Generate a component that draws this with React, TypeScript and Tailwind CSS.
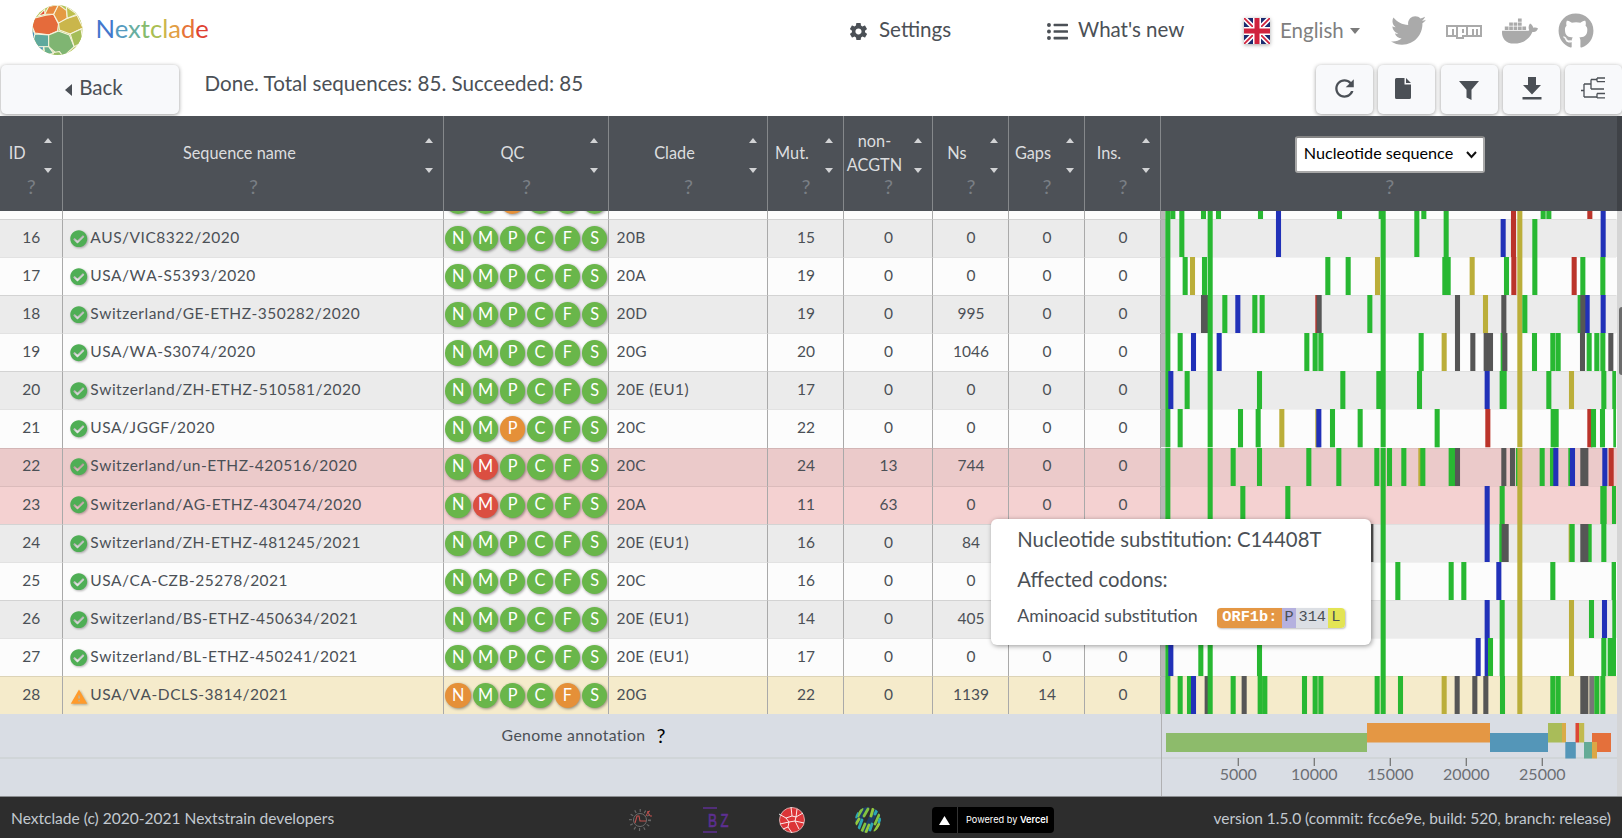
import React from 'react'
import { FaCheckCircle, FaDocker, FaGithub, FaListUl, FaNpm, FaTwitter } from 'react-icons/fa'
import { IoMdRefresh, IoMdSettings } from 'react-icons/io'
import { MdWarning } from 'react-icons/md'

// Mutation colours, keyed by the letter that follows each position in a track.
const COLORS: Record<string, string> = {
  g: '#28b832',
  b: '#2131b8',
  r: '#bb342b',
  y: '#bbae3a',
  n: '#565656',
  m: '#777777',
}

interface Row {
  id: number
  name: string
  qc: string
  clade: string
  mut: number
  non: number
  ns: number
  gaps: number
  bg: string
  warn?: boolean
  track: string
}

// Track units: one third of a pixel, from the left edge of the sequence view.
const ROWS: Row[] = [
  { id: 16, name: 'AUS/VIC8322/2020', qc: 'gggggg', clade: '20B', mut: 15, non: 0, ns: 0, gaps: 0, bg: 'bg-[#ebebeb]',
    track: '22g 64g 149g 354b 668g 769g 857g 1028b 1059r 1078y 1123g 1328b' },
  { id: 17, name: 'USA/WA-S5393/2020', qc: 'gggggg', clade: '20A', mut: 19, non: 0, ns: 0, gaps: 0, bg: 'bg-[#fcfcfc]',
    track: '22g 74g 96y 132g 149g 502g 563g 651y 668g 853g 863g 935y 1038g 1060r 1078y 1123g 1241r 1267g 1327g' },
  { id: 18, name: 'Switzerland/GE-ETHZ-350282/2020', qc: 'gggggg', clade: '20D', mut: 19, non: 0, ns: 995, gaps: 0, bg: 'bg-[#ebebeb]',
    track: '22g 129n 137n 149g 193g 232b 283g 305g 472r 476n 628g 668g 891n 975y 1030n 1078y 1093g 1259g 1280b 1267n 1328b' },
  { id: 19, name: 'USA/WA-S3074/2020', qc: 'gggggg', clade: '20G', mut: 20, non: 0, ns: 1046, gaps: 0, bg: 'bg-[#fcfcfc]',
    track: '22g 59g 99b 149g 176b 439g 464g 481g 668g 782g 851y 891n 937n 977n 990n 1028g 1033n 1078y 1122g 1177g 1193g 1266n 1286g 1309g 1327g 1351n' },
  { id: 20, name: 'Switzerland/ZH-ETHZ-510581/2020', qc: 'gggggg', clade: '20E (EU1)', mut: 17, non: 0, ns: 0, gaps: 0, bg: 'bg-[#ebebeb]',
    track: '22g 31b 80g 149g 297g 547g 655g 668g 777g 980b 1025g 1031g 1078y 1165g 1233y 1330g 1363g' },
  { id: 21, name: 'USA/JGGF/2020', qc: 'ggoggg', clade: '20C', mut: 22, non: 0, ns: 0, gaps: 0, bg: 'bg-[#fcfcfc]',
    track: '22g 59g 149g 240g 293g 364y 472y 475b 516g 599g 668g 830g 982r 1078y 1178g 1187g 1288r 1299g 1326g 1366g' },
  { id: 22, name: 'Switzerland/un-ETHZ-420516/2020', qc: 'grgggg', clade: '20C', mut: 24, non: 13, ns: 744, gaps: 0, bg: 'bg-[#ebcaca]',
    track: '22g 149g 218g 297g 445g 535g 649g 668g 687g 730g 781y 787g 872g 877g 891n 1030n 1056n 1074g 1078y 1145g 1176g 1186b 1231g 1236b 1267n 1276n 1333b 1352r' },
  { id: 23, name: 'Switzerland/AG-ETHZ-430474/2020', qc: 'grgggg', clade: '20A', mut: 11, non: 63, ns: 0, gaps: 0, bg: 'bg-[#f4d1d1]',
    track: '22g 149g 247g 382g 668g 980b 1025g 1078y 1327g 1331g 1362g' },
  { id: 24, name: 'Switzerland/ZH-ETHZ-481245/2021', qc: 'gggggg', clade: '20E (EU1)', mut: 16, non: 0, ns: 84, gaps: 0, bg: 'bg-[#ebebeb]',
    track: '22g 149g 631n 668g 980b 1024g 1031n 1037n 1078y 1232y 1235g 1267n 1286g 1276n 1330g' },
  { id: 25, name: 'USA/CA-CZB-25278/2021', qc: 'gggggg', clade: '20C', mut: 16, non: 0, ns: 0, gaps: 0, bg: 'bg-[#fcfcfc]',
    track: '22g 149g 668g 712g 872g 910g 1015b 1078y 1177g 1361g' },
  { id: 26, name: 'Switzerland/BS-ETHZ-450634/2021', qc: 'gggggg', clade: '20E (EU1)', mut: 14, non: 0, ns: 405, gaps: 0, bg: 'bg-[#ebebeb]',
    track: '22g 149g 668g 980b 1025g 1078y 1233y 1293g 1332b 1363g' },
  { id: 27, name: 'Switzerland/BL-ETHZ-450241/2021', qc: 'gggggg', clade: '20E (EU1)', mut: 17, non: 0, ns: 0, gaps: 0, bg: 'bg-[#fcfcfc]',
    track: '22g 31b 121g 149g 297g 668g 953b 980b 990g 1025g 1078y 1233y 1330g 1349g 1360g' },
  { id: 28, name: 'USA/VA-DCLS-3814/2021', qc: 'ogggog', clade: '20G', mut: 22, non: 0, ns: 1139, gaps: 14, bg: 'bg-[#f5ebcb]', warn: true,
    track: '22g 59g 87g 99b 140n 149g 218g 251n 299g 313g 432g 464g 481g 650g 668g 720g 851y 890n 943n 976n 1026g 1078y 1177g 1193g 1267n 1276n 1294m 1309g 1327g' },
]

const PARTIAL_TRACK =
  '22g 37g 64g 129g 149g 174g 300g 354b 537g 662g 668g 769g 790g 857g 1059r 1078y 1148g 1165g 1288r 1328b'

const QC_BG: Record<string, string> = { g: 'bg-[#69b64a]', o: 'bg-[#e59038]', r: 'bg-[#db4e41]' }

const COLS =
  'grid grid-cols-[63.3px_381.2px_165px_159px_76px_89px_76px_76px_76px_460.5px]'

function Track({ data, start = 0, height = 114 }: { data: string; start?: number; height?: number }) {
  return (
    <svg className="block h-full w-[455px]" viewBox={`1.5 ${start} 1365 ${height}`} preserveAspectRatio="none">
      <rect x="0" y="0" width="14" height="114" fill="#b6b6b6" />
      {start === 0 && <rect x="0" y="0" width="1368" height="2" fill="#000" fillOpacity=".07" />}
      {data.split(' ').map((m) => (
        <rect key={m} x={parseInt(m, 10) - 7.6} y="0" width="15.2" height="114.6" fill={COLORS[m.slice(-1)]} />
      ))}
    </svg>
  )
}

function Badges({ qc, blank = false }: { qc: string; blank?: boolean }) {
  return (
    <div className="flex items-center gap-[1.9px] pl-[1px]">
      {'NMPCFS'.split('').map((c, i) => (
        <span
          key={c}
          className={`${QC_BG[qc[i]]} flex h-[25.4px] w-[25.4px] shrink-0 items-center justify-center rounded-full pb-[1.5px] text-[16.3px] leading-none text-white shadow-[1px_1px_3px_rgba(0,0,0,0.4)]`}
        >
          {blank ? null : c}
        </span>
      ))}
    </div>
  )
}

const cell = 'flex items-center border-r border-[#a9a9a9] overflow-hidden border-t border-t-black/10'

function DataRow({ row }: { row: Row }) {
  return (
    <div className={`${COLS} ${row.bg} h-[38.1px] shrink-0 text-[15.5px]`}>
      <div className={`${cell} justify-center pb-[2px]`}>{row.id}</div>
      <div className={`${cell} pl-[7px]`}>
        {row.warn ? (
          <MdWarning className="mt-[2px] mr-[2px] h-[18px] w-[18px] shrink-0 text-[#ff9b2b] drop-shadow-[1px_1px_1px_rgba(0,0,0,0.3)]" />
        ) : (
          <FaCheckCircle className="mr-[2.5px] h-[17.5px] w-[17.5px] shrink-0 text-[#4fae55] drop-shadow-[1px_1px_1px_rgba(0,0,0,0.3)]" />
        )}
        <span className="pb-[2px] tracking-[0.5px] [font-kerning:none]">{row.name}</span>
      </div>
      <div className={`${cell}`}>
        <Badges qc={row.qc} />
      </div>
      <div className={`${cell} pb-[2px] pl-[7px] tracking-[0.45px] [font-kerning:none]`}>{row.clade}</div>
      {[row.mut, row.non, row.ns, row.gaps, 0].map((v, i) => (
        <div key={i} className={`${cell} justify-center pb-[2px]`}>{v}</div>
      ))}
      <Track data={row.track} />
    </div>
  )
}

function Arrow({ down = false }: { down?: boolean }) {
  return (
    <svg width="8" height="5" viewBox="0 0 8 5" className={down ? 'rotate-180' : ''}>
      <path d="M4 0L8 5H0z" fill="#d2d3d5" />
    </svg>
  )
}

function HeaderCell({ label }: { label: string }) {
  return (
    <div className="flex flex-col border-r border-[#85888b]">
      <div className="flex h-[62px] pt-[12px]">
        <div className="flex flex-1 items-center justify-center text-center text-[16.3px] leading-[24px]">
          <span className="whitespace-pre">{label}</span>
        </div>
        <div className="flex w-[28px] flex-col items-center justify-between pt-[10px] pb-[5px]">
          <Arrow />
          <Arrow down />
        </div>
      </div>
      <div className="mt-[-4px] text-center text-[20px] leading-[24px] text-[#7a7f85]">?</div>
    </div>
  )
}

function Logo() {
  return (
    <svg width="51" height="52" viewBox="0 0 52 52" className="-mt-px">
      <clipPath id="globe">
        <circle cx="26" cy="26" r="25.5" />
      </clipPath>
      <g clipPath="url(#globe)" stroke="#f6f3dc" strokeWidth="1.1" strokeLinejoin="round">
        <path d="M0 0h52v52H0z" fill="#b3c457" />
        <path d="M2 14L14 11L22 10L27 20L26 27L17 31L3 29L0 22z" fill="#e56b3b" />
        <path d="M22 10L27 0L35 6L36 14L27 19z" fill="#e49a42" />
        <path d="M13 10L17 2L27 0L22 10z" fill="#e8883f" />
        <path d="M6 12L13 5L13 10z" fill="#e2492f" />
        <path d="M27 19L36 14L46 11L52 24L39 30L28 26z" fill="#cab64b" />
        <path d="M35 2L46 10L36 14z" fill="#bcbf4d" />
        <path d="M3 30L17 31L17 43L5 43L1 34z" fill="#5fa99d" />
        <path d="M17 31L27 27L38 31L43 43L33 52L26 51L17 43z" fill="#7fb572" />
        <path d="M39 30L50 25L52 38L43 43z" fill="#a5bd58" />
        <path d="M0 24L3 30L1 38L0 38z" fill="#468fc0" />
        <path d="M4 43L12 43L11 48z" fill="#4b97b9" />
        <path d="M12 43L17 43L22 50L13 51z" fill="#6bb18c" />
        <path d="M22 49L28 48L31 52L21 52z" fill="#95bb65" />
      </g>
    </svg>
  )
}

function Flag() {
  return (
    <svg width="26" height="26" viewBox="0 0 26 26" className="shadow-[0_1px_4px_rgba(0,0,0,0.35)]">
      <path d="M0 0h26v26H0z" fill="#1b2b70" />
      <path d="M0 0L26 26M26 0L0 26" stroke="#fff" strokeWidth="5" />
      <path d="M0 0L26 26M26 0L0 26" stroke="#d0233e" strokeWidth="1.8" />
      <path d="M13 0v26M0 13h26" stroke="#fff" strokeWidth="8" />
      <path d="M13 0v26M0 13h26" stroke="#d0233e" strokeWidth="5" />
    </svg>
  )
}

function TreeIcon() {
  return (
    <svg width="24" height="22" viewBox="0 0 24 22" fill="none" stroke="#4b5056" strokeWidth="1.3" className="mr-[1px]">
      <path d="M0 13.500H3M3 7V20M3 7H10M10 2.500V12M10 2.500H16M16 1V4.500M16 1H24M16 4.700H24M10 12H23M3 20H16M16 16.500V21M16 16.500H24M16 20.800H24" />
    </svg>
  )
}

function ToolButton({ children }: { children: React.ReactNode }) {
  return (
    <button className="flex h-[48.5px] w-[57px] shrink-0 items-center justify-center rounded-[5px] bg-[#f8f9fb] pb-[2px] text-[#4b5056] shadow-[0_1px_4px_rgba(0,0,0,0.4)]">
      {children}
    </button>
  )
}

function NavBar() {
  return (
    <header className="flex h-[61px] shrink-0 items-center">
      <div className="ml-[32px] flex w-[810px] items-center gap-[12.5px]">
        <Logo />
        <span className="pb-[4px] text-[25.6px] leading-none">
          <span className="text-[#4377cd]">N</span>
          <span className="text-[#549bc0]">e</span>
          <span className="text-[#68ae9f]">x</span>
          <span className="text-[#86bb6d]">t</span>
          <span className="text-[#aabe52]">c</span>
          <span className="text-[#cdb64a]">l</span>
          <span className="text-[#e29e43]">a</span>
          <span className="text-[#e67439]">d</span>
          <span className="text-[#df4232]">e</span>
        </span>
      </div>
      <div className="ml-[6px] flex w-[199px] items-center text-[20.600px]">
        <IoMdSettings className="mt-[2px] mr-[10px] h-[21px] w-[21px]" />
        <span className="pb-[2px]">Settings</span>
      </div>
      <div className="flex w-[197px] items-center text-[20.500px]">
        <FaListUl className="mt-[2px] mr-[10px] h-[21px] w-[21px]" />
        <span className="pb-[2px]">What's new</span>
      </div>
      <div className="flex w-[147px] items-center text-[20.500px] text-[#7f7f7f]">
        <Flag />
        <span className="ml-[10px]">English</span>
        <svg width="10" height="6" viewBox="0 0 10 6" className="ml-[6px]">
          <path d="M0 0H10L5 6z" fill="#7b7b7b" />
        </svg>
      </div>
      <div className="flex items-center text-[#aaaaaa]">
        <FaTwitter className="h-[35px] w-[35px]" />
        <FaNpm className="ml-[20px] h-[36px] w-[36px]" />
        <FaDocker className="ml-[20px] h-[36px] w-[36px]" />
        <FaGithub className="ml-[20px] h-[36px] w-[36px]" />
      </div>
    </header>
  )
}

function Toolbar() {
  return (
    <div className="flex h-[55px] shrink-0 pt-[4px]">
      <button className="ml-[1px] flex h-[48.5px] w-[178px] items-center justify-center rounded-[5px] bg-[#f8f9fb] pb-[3px] pl-[8px] text-[20.600px] shadow-[0_1px_4px_rgba(0,0,0,0.4)]">
        <svg width="7" height="12" viewBox="0 0 7 12" className="mt-[5px] mr-[7px]">
          <path d="M7 0V12L0 6z" fill="#4b5056" />
        </svg>
        Back
      </button>
      <div className="ml-[25.5px] flex-1 pt-[5px] text-[20.600px] leading-[27px]">Done. Total sequences: 85. Succeeded: 85</div>
      <div className="flex w-[306px] gap-[5.3px] overflow-visible">
        <ToolButton><IoMdRefresh className="h-[27px] w-[27px]" /></ToolButton>
        <ToolButton>
          <svg width="16" height="21" viewBox="0 0 16 21" className="mr-[7px]" fill="#4b5056">
            <path d="M1.500 0H9.500V6.500H16V19.500Q16 21 14.500 21H1.500Q0 21 0 19.500V1.500Q0 0 1.500 0zM11 0L16 5H11z" />
          </svg>
        </ToolButton>
        <ToolButton>
          <svg width="20" height="19" viewBox="0 0 20 19" className="mt-[4px]" fill="#4b5056">
            <path d="M0 0H20L12.500 8.800V19L7.500 16.500V8.800z" />
          </svg>
        </ToolButton>
        <ToolButton>
          <svg width="20" height="23" viewBox="0 0 20 23" className="mt-[1px] ml-[2px]" fill="#4b5056">
            <path d="M6 0H14V8H19L10 17.500L1 8H6zM0.500 20H19.500V22.500H0.500z" />
          </svg>
        </ToolButton>
        <ToolButton><TreeIcon /></ToolButton>
      </div>
    </div>
  )
}

function TableHeader() {
  return (
    <div className="flex h-[95px] shrink-0 bg-[#4d5157] text-[#dcdddf]">
      <div className={`${COLS} h-full`}>
        {['ID', 'Sequence name', 'QC', 'Clade', 'Mut.', 'non-\nACGTN', 'Ns', 'Gaps', 'Ins.'].map((l) => (
          <HeaderCell key={l} label={l} />
        ))}
        <div className="flex flex-col items-center pt-[20px] pr-[4px]">
          <div className="flex h-[37px] w-[190px] items-center justify-between rounded-[3px] border-2 border-[#a8a8a8] border-t-[#858585] bg-white pr-[6px] pl-[7px] text-[16.200px] text-black">
            <span className="pb-[2px]">Nucleotide sequence</span>
            <svg width="11" height="8" viewBox="0 0 11 8" fill="none" stroke="#111" strokeWidth="2">
              <path d="M1 1L5.500 6L10 1" />
            </svg>
          </div>
          <div className="mt-px text-[20px] leading-[24px] text-[#7a7f85]">?</div>
        </div>
      </div>
    </div>
  )
}

function PartialRow() {
  return (
    <div className={`${COLS} h-[8px] shrink-0 bg-[#fcfcfc]`}>
      {[0, 1, 2, 3, 4, 5, 6, 7, 8].map((i) => (
        <div key={i} className="flex h-[8px] items-end overflow-hidden border-r border-[#a9a9a9] pb-[5.500px]">
          {i === 2 && <Badges qc="ggoggg" blank />}
        </div>
      ))}
      <Track data={PARTIAL_TRACK} start={90} height={24} />
    </div>
  )
}

const GENES = [
  [14, 30, 201, 19, '#8dbb6b'],
  [215, 20, 123, 19.5, '#e49744'],
  [338, 30, 58, 19, '#5496b8'],
  [396, 20, 14, 19.5, '#a9bc59'],
  [410, 20, 4, 19.5, '#d9ac48'],
  [413.3, 39, 10.5, 16.5, '#5496b8'],
  [423.5, 20, 3.5, 19.5, '#dc4735'],
  [427, 20, 5.2, 19.5, '#c2ba50'],
  [432, 39, 8, 16.5, '#65ab96'],
  [440, 30, 19, 19, '#e4703b'],
  [440, 39, 5, 16.5, '#dca746'],
] as const

function Annotation() {
  return (
    <div className="flex h-[83px] shrink-0 border-b border-[#8b8d90] bg-[#d9dde4]">
      <div className="w-[1162px] border-r border-[#b0b0b2] text-center text-[15.800px]">
        <div className="flex h-[45px] items-center justify-center border-b-2 border-[#d0d5d8] pb-[2px] pl-[6px]">
          <span className="tracking-[0.35px]">Genome annotation</span>
          <span className="ml-[11px] text-[20px] text-black">?</span>
        </div>
      </div>
      <svg width="460" height="82" viewBox="0 0 460 82" className="block">
        <g transform="translate(-10 -11)">
          <path d="M10 55H465" stroke="#d0d5d8" strokeWidth="2" />
          {GENES.map(([x, y, w, h, c], i) => (
            <rect key={i} x={x} y={y} width={w} height={h} fill={c} />
          ))}
          {[5000, 10000, 15000, 20000, 25000].map((v, i) => (
            <g key={v}>
              <path d={`M${86.3 + i * 76} 55v8`} stroke="#777" strokeWidth="1.3" />
              <text x={86.3 + i * 76} y="77" textAnchor="middle" fontSize="16" fill="#6c6f74">{v}</text>
            </g>
          ))}
        </g>
      </svg>
      <div className="-ml-[5px] h-[82px] w-[5px] bg-[#d4d5d7]" />
    </div>
  )
}

function Virus() {
  return (
    <svg width="24" height="26" viewBox="0 0 24 26" fill="none">
      <circle cx="11" cy="13" r="6.5" stroke="#6d6d6d" />
      <circle cx="11" cy="13" r="9.5" stroke="#686868" strokeWidth="3" strokeDasharray="1.2 3.7" />
      <path d="M6 16L8 9L10 9L11 14H17" stroke="#c0504d" strokeWidth="1.1" />
      <path d="M17 9l2-4l2 4h2M18 5l3-1" stroke="#c0504d" />
    </svg>
  )
}

function Footer() {
  return (
    <footer className="flex h-[41px] shrink-0 items-center justify-between bg-[#2d2d2d] px-[11px] pt-[5px] text-[15.550px] text-[#c2c9d0]">
      <span className="w-[615px] pb-[3px]">Nextclade (c) 2020-2021 Nextstrain developers</span>
      <div className="flex flex-1 items-center">
        <div className="ml-[3px] w-[74px]"><Virus /></div>
        <svg width="26" height="26" viewBox="0 0 26 26" className="mr-[50px]">
          <path d="M0 1H14M0 25H14" stroke="#5d2f91" strokeWidth="1.5" />
          <g fill="#5d2f91" stroke="#5d2f91" strokeWidth=".6" fontSize="18" className="font-['Liberation_Sans',sans-serif]">
            <text x="5" y="19.500" textLength="9" lengthAdjust="spacingAndGlyphs">B</text>
            <text x="17.500" y="19.500" textLength="8" lengthAdjust="spacingAndGlyphs">Z</text>
          </g>
        </svg>
        <svg width="26" height="26" viewBox="0 0 26 26" className="mr-[50px]">
          <circle cx="13" cy="13" r="12.5" fill="#dc3538" stroke="#e9c6c6" strokeWidth=".8" />
          <path d="M12 0L13 9L7 11L0 7M7 11L10 15L1 17M10 15L9 20L4 22M9 20L13 26M13 9L17 10L16 14L10 15M17 10L24 6M16 14L25 16M16 14L20 22M17 10L18 2" fill="none" stroke="#fff" strokeWidth=".9" />
        </svg>
        <svg width="26" height="26" viewBox="0 0 26 26" className="mr-[51px]">
          <clipPath id="hd"><circle cx="13" cy="13" r="13" /></clipPath>
          <g clipPath="url(#hd)" strokeLinecap="round" strokeWidth="2.8" fill="none">
            <path d="M13 -3L3 14M20 4L10 25" stroke="#1f3c66" strokeWidth="6" />
            <path d="M7 2L3 9M13 2L9 9M24 8L20 17M10 17L7 24" stroke="#82c341" />
            <path d="M18 2L16 9M14 18L11 25M24 17L20 24M4 12L1 17" stroke="#93c83d" />
            <path d="M2 6L1 10M22 3L20 7M7 13L4 21M17 17L15 23M25 12L24 15" stroke="#2ba6b4" />
          </g>
        </svg>
        <div className="flex h-[26px] w-[122px] items-center rounded-[4px] bg-black font-['Inter',sans-serif] text-[9.200px] text-white">
          <span className="flex h-full w-[26px] items-center justify-center border-r border-[#333]">
            <svg width="11" height="9" viewBox="0 0 11 9"><path d="M5.500 0L11 9H0z" fill="#fff" /></svg>
          </span>
          <span className="ml-[8px] whitespace-nowrap">Powered by <b className="font-semibold">Vercel</b></span>
        </div>
      </div>
      <span className="pb-[3px] text-[15.500px]">version 1.5.0 (commit: fcc6e9e, build: 520, branch: release)</span>
    </footer>
  )
}

function MutationTooltip() {
  return (
    <div className="absolute top-[518.5px] left-[991.3px] h-[126.5px] w-[380px] rounded-[6px] bg-white px-[26px] pt-[6px] shadow-[1px_1px_5px_rgba(0,0,0,0.4)]">
      <div className="text-[20.300px] leading-[28px]">Nucleotide substitution: C14408T</div>
      <div className="mt-[12px] text-[20.300px] leading-[28px]">Affected codons:</div>
      <div className="mt-[9px] flex items-center text-[17.800px] leading-[26px]">
        <span className="w-[200px]">Aminoacid substitution</span>
        <span className="mt-[6px] flex h-[20px] overflow-hidden rounded-[4px] font-['Liberation_Mono',monospace] text-[15.300px] leading-[19px] shadow-[1px_1px_2px_rgba(0,0,0,0.25)]">
          <span className="w-[64.5px] bg-[#e49744] pl-[5px] font-bold text-white">ORF1b:</span>
          <span className="w-[14.5px] bg-[#b5b1df] text-center">P</span>
          <span className="w-[32px] bg-[#dcdfe4] text-center">314</span>
          <span className="w-[17px] bg-[#e3e454] pl-[3px]">L</span>
        </span>
      </div>
    </div>
  )
}

export default function App() {
  return (
    <div className="relative flex h-[838px] w-[1622px] flex-col overflow-hidden bg-white font-['Lato',sans-serif] text-[#4b5056]">
      <NavBar />
      <Toolbar />
      <div className="relative flex h-[598px] shrink-0 flex-col overflow-hidden">
        <TableHeader />
        <div className="flex h-[503px] flex-col overflow-hidden">
          <PartialRow />
          {ROWS.map((r) => (
            <DataRow key={r.id} row={r} />
          ))}
        </div>
        <div className="absolute top-0 right-0 h-[95px] w-[5px] bg-[#3f4247]" />
        <div className="absolute right-0 bottom-0 flex h-[503px] w-[5.5px] justify-end bg-[#d5d5d5]">
          <div className="mt-[96px] h-[68px] w-[3px] rounded-l-[3px] bg-[#6c6c6c]" />
        </div>
      </div>
      <Annotation />
      <Footer />
      <MutationTooltip />
    </div>
  )
}
